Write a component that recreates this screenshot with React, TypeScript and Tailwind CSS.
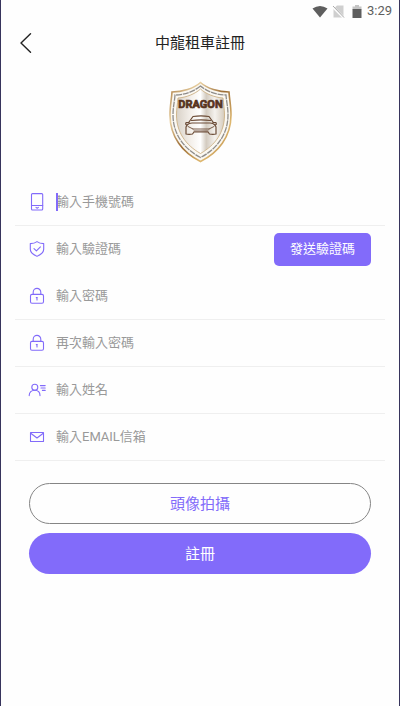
import React from 'react';

const stroke = {
  fill: 'none',
  stroke: 'currentColor',
  strokeWidth: 1.1,
  strokeLinecap: 'round' as const,
  strokeLinejoin: 'round' as const,
};

function Icon({ children }: { children: React.ReactNode }) {
  return (
    <svg viewBox="0 0 18 18" className="-mx-px size-[18px] shrink-0 text-[#826bfa]" aria-hidden="true" {...stroke}>
      {children}
    </svg>
  );
}

const PhoneIcon = () => (
  <Icon>
    <rect x="3.5" y="0.6" width="11.2" height="16.4" rx="1" />
    <path d="M3.500 12.500h11.200M8 14.400l1.200 0.800 1.200-0.800" />
  </Icon>
);

const ShieldIcon = () => (
  <Icon>
    <path d="M9 1.600c1.800 1.400 4.200 2 6.700 2v5.700c0 3.200-2.900 5.400-6.700 7-3.800-1.600-6.700-3.800-6.700-7V3.600C4.800 3.600 7.200 3 9 1.600z" />
    <path d="M6 8.600l2.400 2.300 4-4.100" />
  </Icon>
);

const LockIcon = () => (
  <Icon>
    <rect x="2.5" y="7.4" width="13" height="8.8" rx="1.5" />
    <path d="M5.200 7.400V5.200a3.800 3.800 0 0 1 7.600 0v2.200M9 10.500v2.400M8.300 10.600h1" />
  </Icon>
);

const UserIcon = () => (
  <Icon>
    <circle cx="6.800" cy="6.200" r="3" />
    <path d="M1.200 14.600c0-3.200 2.200-5.400 5.600-5.400s5.200 2.200 5.200 5.400M12.400 4.600h4.800M13 7h4.200M14.400 9.400h2.800" />
  </Icon>
);

const MailIcon = () => (
  <Icon>
    <rect x="2.500" y="4.500" width="13" height="9" rx="0.3" />
    <path d="M2.700 5.200L9 10l6.300-4.800" />
  </Icon>
);

function Logo() {
  return (
    <svg viewBox="0 0 64 82" className="h-[82px] w-16" role="img" aria-label="DRAGON">
      <defs>
        <linearGradient id="gold" x1="0" y1="0" x2="1" y2="1">
          <stop offset="0" stopColor="#a87b45" />
          <stop offset="0.25" stopColor="#e8cfa0" />
          <stop offset="0.5" stopColor="#9b6c35" />
          <stop offset="0.75" stopColor="#dfb86f" />
          <stop offset="1" stopColor="#a77638" />
        </linearGradient>
        <linearGradient id="plate" x1="0" y1="0" x2="1" y2="0">
          <stop offset="0" stopColor="#d9d2c8" />
          <stop offset="0.3" stopColor="#f4f0eb" />
          <stop offset="0.5" stopColor="#ffffff" />
          <stop offset="0.62" stopColor="#d3cbc0" />
          <stop offset="0.8" stopColor="#f5f2ee" />
          <stop offset="1" stopColor="#d5cbbd" />
        </linearGradient>
      </defs>
      <path
        d="M32.500 1.500C26 7.500 14 11 4 11 3.500 19 2 25 2 34c0 22 13 38 30.500 46.500C50 72 63 56 63 34c0-9-1.500-15-2-23C51 11 39 7.500 32.500 1.500z"
        fill="#fbf8f2"
        stroke="url(#gold)"
        strokeWidth="1.6"
      />
      <path
        d="M32.500 5C26 10.500 16 14 7 14 6.500 21 5 26 5 34c0 19 11 34 27.500 42.500C49 68 60 53 60 34c0-8-1.500-13-2-20C49 14 39 10.500 32.500 5z"
        fill="none"
        stroke="#8f8d8b"
        strokeWidth="1.3"
        strokeDasharray="6 0.8"
      />
      <path
        d="M32.500 8C27 13 18 16.500 10 17 9.500 23 8.500 28 8.500 34c0 17 9 30 24 38.500C47.500 64 56.500 51 56.500 34c0-6-1-11-1.500-17C47 16.500 38 13 32.500 8z"
        fill="url(#plate)"
        stroke="#c7a878"
        strokeWidth="0.8"
      />
      <text
        x="32.500"
        y="26.500"
        textAnchor="middle"
        fill="#58341f"
        stroke="#58341f"
        strokeWidth="0.7"
        className="font-['Liberation_Sans_Narrow','Roboto',sans-serif] text-[11px] font-bold"
      >
        DRAGON
      </text>
      <g fill="none" stroke="#6b4b36" strokeWidth="1.2" strokeLinejoin="round" strokeLinecap="round">
        <path d="M21 41l4-5.500q8-1.200 16 0l4 5.500M23.500 39.500q9.500-1.200 19 0" />
        <path d="M21 41.500l-3 .2q-1 2 1 2.300M45 41.500l3 .2q1 2-1 2.300" />
        <path d="M19 44q2-2 5-2h18q3 0 5 2l1 2v7q-3 .8-6.500 0l-1.500-2H26l-1.500 2q-3.500 .8-6.500 0v-7z" />
        <path d="M20 45.500l5 2.500M46 45.500l-5 2.500M25 48h16M26 50h14" strokeWidth="0.9" />
      </g>
    </svg>
  );
}

type FieldProps = {
  id: string;
  label: string;
  type?: string;
  icon: React.ReactNode;
  focused?: boolean;
  divider?: boolean;
  action?: React.ReactNode;
};

function Field({ id, label, type = 'text', icon, focused = false, divider = true, action }: FieldProps) {
  return (
    <div className={`flex h-[47px] items-center gap-[11px] border-b px-3.5 ${divider ? 'border-[#efefef]' : 'border-transparent'}`}>
      <label htmlFor={id} aria-label={label}>
        {icon}
      </label>
      <div className="relative min-w-0 flex-1">
        <input
          id={id}
          type={type}
          placeholder={label}
          className="block h-6 w-full bg-transparent text-[13px] leading-6 text-[#333] outline-none placeholder:text-[#999]"
        />
        {focused && <span className="absolute top-[3px] left-0 h-[18px] w-0.5 bg-[#826bfa]" />}
      </div>
      {action}
    </div>
  );
}

export default function App() {
  return (
    <div className="flex min-h-screen flex-col border-x border-[#37345c] bg-[#fefefe] font-['Roboto','Noto_Sans_CJK_TC',sans-serif]">
      <div className="flex h-[22px] items-center justify-end px-[7px] text-[#5e5e5e]">
        <svg viewBox="0 0 16 13" className="mr-1 h-[13px] w-4" fill="currentColor" aria-label="Wi-Fi">
          <path d="M0.500 3.500Q8-1.500 15.500 3.500L8 12.500z" />
        </svg>
        <svg viewBox="0 0 13 13" className="mr-1.5 h-[13px] w-[13px]" aria-label="No SIM">
          <path d="M5 0.500h6.500v12h-10V4z" fill="#cfcfcf" />
          <path d="M0.500 1.500l11 11" stroke="#fefefe" strokeWidth="2.4" />
          <path d="M1 1l11 11.500" stroke="#aaaaaa" strokeWidth="1" />
        </svg>
        <svg viewBox="0 0 12 13" className="mr-1 h-[13px] w-3" aria-label="Battery">
          <path d="M4 0h4v1.500h2.500v3h-9v-3H4z" fill="#c4c4c4" />
          <path d="M1.500 4h9v9h-9z" fill="currentColor" />
        </svg>
        <span className="text-[13px] leading-4">3:29</span>
      </div>

      <header className="grid h-[42px] grid-cols-[40px_1fr_40px] items-center">
        <button type="button" aria-label="返回" className="flex h-10 items-center justify-center pl-2.5">
          <svg viewBox="0 0 12 20" className="h-5 w-3 text-[#222]" {...stroke} strokeWidth={1.4}>
            <path d="M10.500 0.800L1 10l9.500 9.200" />
          </svg>
        </button>
        <h1 className="text-center text-[15px] leading-6 text-[#222]">中龍租車註冊</h1>
      </header>

      <div className="mt-[17px] flex justify-center">
        <Logo />
      </div>

      <form className="mt-4 px-3.5" onSubmit={(e) => e.preventDefault()}>
        <Field id="phone" type="tel" label="輸入手機號碼" icon={<PhoneIcon />} focused />
        <Field
          id="code"
          label="輸入驗證碼"
          icon={<ShieldIcon />}
          divider={false}
          action={
            <button type="button" className="h-[33px] rounded-[5px] bg-[#826bfa] px-4 text-[13px] leading-5 text-white">
              發送驗證碼
            </button>
          }
        />
        <Field id="password" type="password" label="輸入密碼" icon={<LockIcon />} />
        <Field id="confirm" type="password" label="再次輸入密碼" icon={<LockIcon />} />
        <Field id="name" label="輸入姓名" icon={<UserIcon />} />
        <Field id="email" type="email" label="輸入EMAIL信箱" icon={<MailIcon />} />

        <div className="mt-[22px] flex flex-col gap-[9px] px-3.5 text-[15px] leading-6">
          <button type="button" className="h-[41px] rounded-full border border-[#858585] text-[#826bfa]">
            頭像拍攝
          </button>
          <button type="submit" className="h-[41px] rounded-full bg-[#826bfa] text-white">
            註冊
          </button>
        </div>
      </form>
    </div>
  );
}
